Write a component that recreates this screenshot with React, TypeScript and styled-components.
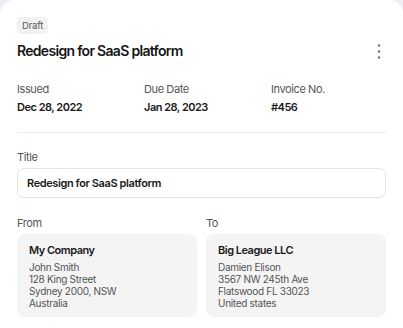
import styled, { createGlobalStyle } from "styled-components";

const Global = createGlobalStyle`
  body {
    margin: 0;
    background: #efedf4;
    font-family: Inter, "Noto Sans", sans-serif;
    color: #1a1a1a;
  }
`;

const Card = styled.div`
  background: #fff;
  border-radius: 14px 14px 0 0;
  min-height: 328px;
  box-sizing: border-box;
  padding: 17px 17px 0 17px;
`;

const BadgeRow = styled.div`
  display: flex;
`;

const Badge = styled.span`
  background: #f2f2f3;
  color: #555;
  font-size: 9.5px;
  letter-spacing: -0.2px;
  line-height: 17px;
  padding: 0 5px;
  border-radius: 4px;
`;

const Header = styled.div`
  display: flex;
  align-items: center;
  justify-content: space-between;
  margin-top: 7px;
`;

const Heading = styled.h1`
  margin: 0;
  font-size: 14px;
  letter-spacing: -0.7px;
  font-weight: 600;
  line-height: 20px;
  color: #161616;
`;

const MenuButton = styled.button`
  border: 0;
  background: none;
  padding: 0;
  margin-right: 5px;
  display: flex;
  color: #6b6b73;
`;

const Meta = styled.div`
  display: grid;
  grid-template-columns: 127px 127px 1fr;
  margin-top: 21px;
  padding-bottom: 17px;
  border-bottom: 1px solid #ededee;
`;

const Label = styled.div`
  font-size: 11px;
  letter-spacing: -0.4px;
  line-height: 15px;
  color: #555;
`;

const Value = styled.div`
  font-size: 11px;
  letter-spacing: -0.5px;
  font-weight: 600;
  line-height: 15px;
  margin-top: 3px;
  color: #1a1a1a;
`;

const Section = styled.div<{ $top: number }>`
  margin-top: ${(p) => p.$top}px;
`;

const Input = styled.div`
  margin-top: 3px;
  height: 30px;
  box-sizing: border-box;
  border: 1px solid #e3e3e5;
  border-radius: 7px;
  padding: 0 9px;
  display: flex;
  align-items: center;
  font-size: 11px;
  letter-spacing: -0.4px;
  font-weight: 600;
  color: #1a1a1a;
`;

const Parties = styled.div`
  display: grid;
  grid-template-columns: 180px 180px;
  column-gap: 9px;
  margin-top: 18px;
`;

const Address = styled.div`
  margin-top: 3px;
  height: 83px;
  box-sizing: border-box;
  background: #f4f4f5;
  border-radius: 8px;
  padding: 8px 12px;
`;

const Company = styled.div`
  font-size: 11px;
  letter-spacing: -0.5px;
  font-weight: 600;
  line-height: 16px;
  color: #1a1a1a;
  margin-bottom: 3px;
`;

const Line = styled.div`
  font-size: 10px;
  letter-spacing: -0.3px;
  line-height: 12px;
  color: #555;
`;

function Dots() {
  return (
    <svg width="4" height="15" viewBox="0 0 4 15">
      <circle cx="2" cy="1.5" r="1.2" fill="currentColor" />
      <circle cx="2" cy="7.5" r="1.2" fill="currentColor" />
      <circle cx="2" cy="13.5" r="1.2" fill="currentColor" />
    </svg>
  );
}

const meta = [
  { label: "Issued", value: "Dec 28, 2022" },
  { label: "Due Date", value: "Jan 28, 2023" },
  { label: "Invoice No.", value: "#456" },
];

const parties = [
  {
    label: "From",
    name: "My Company",
    lines: ["John Smith", "128 King Street", "Sydney 2000, NSW", "Australia"],
  },
  {
    label: "To",
    name: "Big League LLC",
    lines: ["Damien Elison", "3567 NW 245th Ave", "Flatswood FL 33023", "United states"],
  },
];

export default function App() {
  return (
    <>
      <Global />
      <Card>
        <BadgeRow>
          <Badge>Draft</Badge>
        </BadgeRow>
        <Header>
          <Heading>Redesign for SaaS platform</Heading>
          <MenuButton>
            <Dots />
          </MenuButton>
        </Header>
        <Meta>
          {meta.map((m) => (
            <div key={m.label}>
              <Label>{m.label}</Label>
              <Value>{m.value}</Value>
            </div>
          ))}
        </Meta>
        <Section $top={17}>
          <Label>Title</Label>
          <Input>Redesign for SaaS platform</Input>
        </Section>
        <Parties>
          {parties.map((p) => (
            <div key={p.label}>
              <Label>{p.label}</Label>
              <Address>
                <Company>{p.name}</Company>
                {p.lines.map((l) => (
                  <Line key={l}>{l}</Line>
                ))}
              </Address>
            </div>
          ))}
        </Parties>
      </Card>
    </>
  );
}
